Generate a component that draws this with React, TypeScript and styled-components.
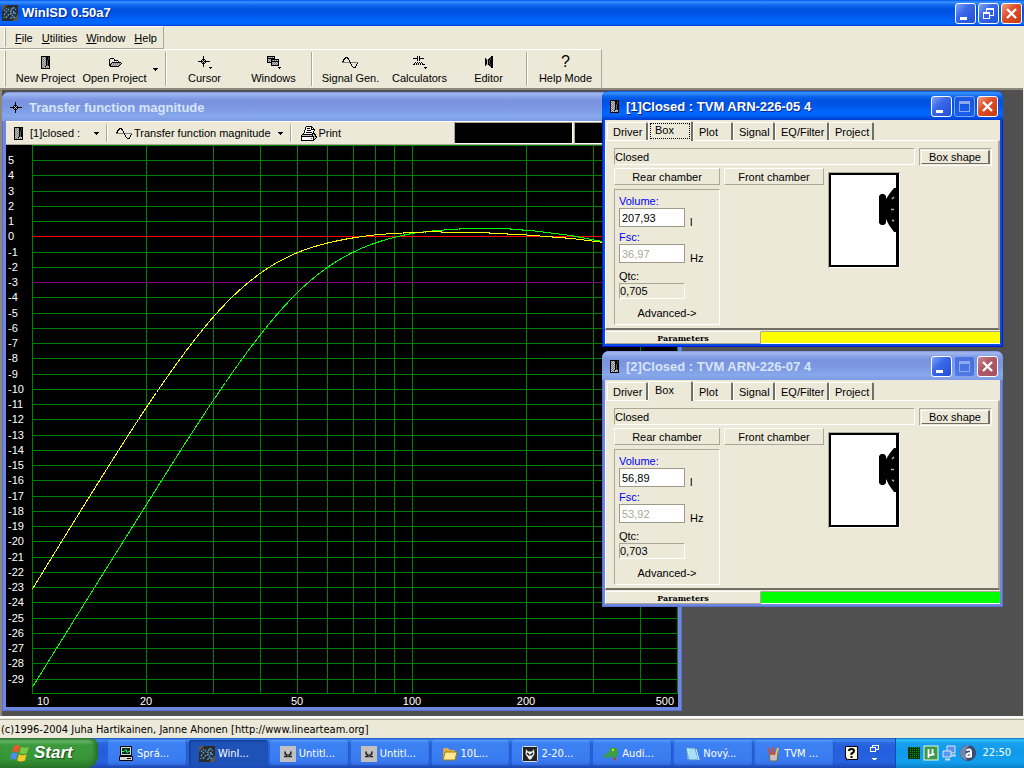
import React from 'react';
import styled, { createGlobalStyle, css } from 'styled-components';

const face = '#ece9d8';
const shade = '#aca899';
const dark = '#716f64';
const ui = '"Liberation Sans", Arial, sans-serif';
const tahoma = '"DejaVu Sans Condensed", "DejaVu Sans", sans-serif';

const Global = createGlobalStyle`
  * { box-sizing: border-box; }
  body { margin: 0; background: ${face}; font-family: ${ui}; font-size: 11px; line-height: 14px; color: #000; }
  button, input { font: inherit; color: inherit; margin: 0; }
  button { padding: 0; border: 0; background: none; cursor: default; white-space: nowrap; }
  svg { display: block; flex: none; }
`;

/* ---------- pixel icons ---------- */

const palette: Record<string, string> = {
  K: '#000000', W: '#ffffff', G: '#c0c0c0', D: '#808080', Y: '#e8e070', R: '#ff0000', E: '#404040',
};

function Pixels({ rows }: { rows: string[] }) {
  const w = Math.max(...rows.map((r) => r.length));
  const cells: React.ReactNode[] = [];
  rows.forEach((row, y) => {
    let x = 0;
    while (x < row.length) {
      const c = row[x];
      let n = 1;
      while (row[x + n] === c) n += 1;
      if (c !== '.') cells.push(<rect key={`${x}-${y}`} x={x} y={y} width={n} height={1} fill={palette[c]} />);
      x += n;
    }
  });
  return (
    <svg width={w} height={rows.length} viewBox={`0 0 ${w} ${rows.length}`} shapeRendering="crispEdges" aria-hidden="true">
      {cells}
    </svg>
  );
}

const cabinet = [
  'KKKKKKKKK', 'KGDGDKKEK', 'KDGDGKKEK', 'KGDGDKKEK', 'KDGDGKEKK', 'KGDGDKDKK', 'KDGDGKEKK',
  'KGDGDKDKK', 'KDGDGKEKK', 'KGDGDKDKK', 'KDGDKGGGK', 'KGDGDGDGK', 'KKKKKKKKK',
];
const crosshair = [
  '.....K......', '.....K......', '.....K......', '....KKK.....', '...KGKGK....', 'KKKKKYKKKKKK',
  '...KGKGK....', '....KKK.....', '.....K......', '.....K......', '.....K......',
];
const crosshairMenu = [
  ...crosshair, '...........KKK', '............K',
];
const folder = [
  '..KKKK........', '.KGWGWK.......', '.KWGWGKKKK....', '.KGWGWGWGWK...', '.KWGKKKKKKKKK.',
  '.KGKGDGDGDGDGK', '.KKDGDGDGDGDK.', '.KKGDGDGDGDK..', '..KKKKKKKKK...',
];
const cascade = [
  'KKKKKKKK......', 'KDGDGDGK......', 'KKKKKKKK......', 'KGDGKKKKKKKK..', 'KDGDKDGDGDGK..', 'KGDGKKKKKKKK..',
  'KKKKKGDGDGDK..', '....KDGDGDGK..', '....KGDGDGDK..', '....KKKKKKKK..', '..............', '...........KKK', '............K.',
];
const circuit = [
  '....K.K.......', '....K.K.......', 'KKKKK.KKKKK...', '....K.K.......', '....K.K.......', '..............',
  '..K.K.K.K.....', '.K.K.K.K.K....', 'KK.K.K.K.KKK..', '..............', '..............', '...........KKK', '............K.',
];
const speaker = [
  '......KK', '.....EKK', 'K...KEKK', 'KEGKKEKK', 'KKGKEKKK', 'KKGKEKKK', 'KKGKEKKK', 'KKGKEKKK', 'KEGKKEKK', 'K...KEKK',
  '.....EKK', '......KK',
];
const printer = [
  '.....KKKKKK.....', '....KWWWWWKK....', '....KWKKKWKWK...', '....KWWWWWKKKK..', '...KWWKKKKWWWK..', '...KWWWWWWWWK...',
  '...KWKKKKKKWK...', '..KWWWWWWWWKKK..', '.KKKKKKKKKKKGKK.', 'KGGGGGGGGGGKGGK.', 'KKKKKKKKKKKKKGKK', 'KWWWWWWWWWWWKGGK',
  'KWWWWWWWWWRWKGK.', 'KWWWWWWWWWWWKK..', 'KKKKKKKKKKKKK...',
];

const Wave = () => (
  <svg width="17" height="13" viewBox="0 0 17 13" aria-hidden="true" shapeRendering="crispEdges">
    <path d="M0 6.5H16" stroke="#808080" />
    <path d="M.5 6.5L2.5 2.5L4.5 1.5L6.5 2.5L9.5 9.5L11.5 11.5L13.5 11L15.5 7" fill="none" stroke="#000" />
  </svg>
);

const AppIcon = () => (
  <svg width="16" height="16" viewBox="0 0 16 16" aria-hidden="true">
    <rect width="16" height="16" fill="#2b2b2b" />
    <path d="M0 0H5L0 6ZM10 16L16 9V16Z" fill="#5b5750" />
    <path d="M2 10L6 5L8 3M8 7L11 2L14 5M4 13L7 9L12 8L9 13L13 12M2 6L5 3M11 6L14 9" fill="none" stroke="#4f9fe0" strokeWidth="1.300" strokeDasharray="2 1" />
    <path d="M1 13L4 11M10 4L8 10" stroke="#a0a098" strokeDasharray="1 1" />
  </svg>
);

/* ---------- application frame ---------- */

const activeTitle = css`
  background: linear-gradient(#0058ee 0, #3a93ff 2px, #1069ee 5px, #0053e1 9px, #0054e6 14px, #0066ff 21px, #0064fb 24px, #003dd0 100%);
`;
const inactiveTitle = css`
  background: linear-gradient(#7a96e0 0, #a3b8f0 2px, #8aa2e8 5px, #7a93df 9px, #7c98e2 16px, #86a8ec 24px, #7e9ae4 100%);
`;

const Page = styled.div`
  min-height: 100vh;
  display: flex;
  flex-direction: column;
`;

const AppTitle = styled.header`
  ${activeTitle}
  height: 26px;
  padding: 0 2px;
  display: flex;
  align-items: center;
  gap: 4px;
`;

const Caption = styled.h1<{ $dim?: boolean }>`
  margin: 0;
  flex: 1;
  min-width: 0;
  white-space: nowrap;
  overflow: hidden;
  font: 700 13px/18px ${ui};
  color: ${(p) => (p.$dim ? '#d8e4f8' : '#fff')};
  text-shadow: ${(p) => (p.$dim ? 'none' : '1px 1px #0a2a8c')};
`;

const CaptionButtons = styled.div`
  display: flex;
  gap: 2px;
`;

const CaptionButton = styled.button<{ $tone?: 'close' | 'closeDim' | 'off' }>`
  width: 21px;
  height: 21px;
  border: 1px solid ${(p) => (p.$tone === 'off' ? '#7f9ff0' : '#fff')};
  border-radius: 3px;
  display: grid;
  place-items: center;
  background: ${(p) =>
    p.$tone === 'close'
      ? 'linear-gradient(135deg, #f0a080, #e0512c 40%, #c83a10)'
      : p.$tone === 'closeDim'
        ? 'linear-gradient(135deg, #c88a98, #b05a68 40%, #a85060)'
        : p.$tone === 'off'
          ? 'rgba(40, 90, 225, 0.6)'
          : 'linear-gradient(135deg, #7fa4f8, #3a68e8 40%, #1f50d8)'};
`;

const Minimize = () => (
  <svg width="19" height="19" viewBox="0 0 19 19"><path d="M4 13H11V16H4Z" fill="#fff" /></svg>
);
const Maximize = () => (
  <svg width="19" height="19" viewBox="0 0 19 19" shapeRendering="crispEdges">
    <path d="M4.5 5V14.5H14.5V5M4 5H15" fill="none" stroke="#8fa8f0" /><path d="M4 4H15V7H4Z" fill="#8fa8f0" />
  </svg>
);
const Restore = () => (
  <svg width="19" height="19" viewBox="0 0 19 19" shapeRendering="crispEdges">
    <path d="M7 4H15V6H7ZM4 8H11V10H4Z" fill="#fff" />
    <path d="M4.5 8V14.5H10.5V8M7.5 4V8M14.5 4V11.5H11" fill="none" stroke="#fff" />
  </svg>
);
const Close = () => (
  <svg width="19" height="19" viewBox="0 0 19 19"><path d="M5 5L14 14M14 5L5 14" stroke="#fff" strokeWidth="2.4" /></svg>
);

const MenuBar = styled.nav`
  align-self: flex-start;
  display: flex;
  align-items: center;
  gap: 9px;
  height: 23px;
  padding: 0 6px 0 4px;
  border-top: 1px solid #fff;
  border-right: 1px solid ${shade};
  border-bottom: 1px solid ${shade};
`;

const Grip = styled.span`
  width: 2px;
  align-self: stretch;
  margin: 1px 0;
  border-left: 1px solid #fff;
  border-right: 1px solid ${shade};
`;

const MenuItem = styled.button`
  height: 18px;
  &::first-letter { text-decoration: underline; }
`;

const ToolBar = styled.div`
  align-self: flex-start;
  display: flex;
  height: 39px;
  padding-left: 4px;
  border-top: 1px solid #fff;
  border-right: 1px solid ${shade};
`;

const ToolGroup = styled.div`
  display: flex;
  padding: 0 3px;
  &:nth-child(2) { padding-left: 5px; }
  &:last-child { padding-right: 1px; }
`;

const ToolButton = styled.button`
  width: 69px;
  display: flex;
  flex-direction: column;
  align-items: center;
  padding-top: 3px;
`;

const ToolIcon = styled.span`
  height: 18px;
  display: flex;
  align-items: center;
  font: 16px/18px ${ui};
`;

const Divider = styled.span`
  width: 2px;
  margin: 2px 0;
  border-left: 1px solid ${shade};
  border-right: 1px solid #fff;
`;

const Arrow = () => (
  <svg width="5" height="3" viewBox="0 0 5 3" shapeRendering="crispEdges" aria-hidden="true">
    <path d="M0 0H5V1H0ZM1 1H4V2H1ZM2 2H3V3H2Z" fill="#000" />
  </svg>
);

const DropButton = styled.button`
  width: 13px;
  display: grid;
  place-items: center;
`;

/* ---------- MDI workspace ---------- */

const Workspace = styled.main`
  position: relative;
  flex: 1;
  min-height: 626px;
  margin-right: 1px;
  background: #505050;
  border: solid #8c897c;
  border-width: 2px 0 0 2px;
  overflow: hidden;
`;

const WindowFrame = styled.section<{ $x: number; $y: number; $w: number; $active?: boolean; $pad: number }>`
  position: absolute;
  left: ${(p) => p.$x}px;
  top: ${(p) => p.$y}px;
  width: ${(p) => p.$w}px;
  padding: 0 ${(p) => p.$pad}px ${(p) => p.$pad}px;
  border-radius: 7px 7px 0 0;
  background: ${(p) => (p.$active ? '#0a4be0' : '#7087e0')};
  box-shadow: inset 0 0 0 1px ${(p) => (p.$active ? '#0019cf' : '#5a6fd0')};
  overflow: hidden;
`;

const WindowTitle = styled.header<{ $active?: boolean; $inset: number }>`
  ${(p) => (p.$active ? activeTitle : inactiveTitle)}
  height: 29px;
  margin: 0 -${(p) => p.$inset}px;
  padding: 2px 5px 0 8px;
  display: flex;
  align-items: center;
  gap: 7px;
`;

const GraphBar = styled.div`
  display: flex;
  align-items: stretch;
  height: 24px;
  background: ${face};
  border-top: 1px solid #fff;
  border-bottom: 1px solid ${shade};
  overflow: hidden;
`;

const GraphButton = styled.button<{ $w: number }>`
  width: ${(p) => p.$w}px;
  display: flex;
  align-items: center;
  gap: 1px;
  padding: 0 7px 0 8px;
  & > svg:last-child { margin-left: auto; }
`;

const CabinetLabel = styled.span`
  margin-left: 6px;
`;

const Readout = styled.output<{ $w: number }>`
  width: ${(p) => p.$w}px;
  flex: none;
  background: #000;
  border: 1px solid ${shade};
  border-right-color: #fff;
  border-bottom-color: #fff;
`;

const Readouts = styled.div`
  display: flex;
  gap: 1px;
  margin-left: auto;
`;

const Plot = styled.svg`
  background: #000;
  font: 11px ${ui};
  fill: #fff;
`;

const plotLeft = 26;
const plotRight = 671;
const plotBottom = 548;
const dbToY = (db: number) => 91.75 - 15.25 * db;
const hzToX = (hz: number) => plotLeft + 380 * Math.log10(hz / 10);

type Trace = { color: string; fc: number; q: number; gain: [number, number][] };

const traces: Trace[] = [
  { color: '#00ff00', fc: 53.92, q: 0.703, gain: [[10, -0.25], [20, -0.2], [40, 0.02], [60, 0.25], [80, 0.45], [100, 0.6], [140, 0.65], [180, 0.56], [210, 0.4], [260, 0.1], [330, -0.4], [500, -1.2]] },
  { color: '#ffff00', fc: 36.97, q: 0.705, gain: [[10, -0.35], [20, -0.1], [40, 0.05], [60, 0.2], [80, 0.33], [110, 0.38], [150, 0.3], [200, 0.12], [260, -0.1], [330, -0.42], [500, -1.2]] },
];

function tracePath({ fc, q, gain }: Trace) {
  const pts: string[] = [];
  for (let x = plotLeft; x <= plotRight; x += 1) {
    const hz = 10 * 10 ** ((x - plotLeft) / 380);
    const r = hz / fc;
    const hp = 20 * Math.log10((r * r) / Math.hypot(1 - r * r, r / q));
    let i = 0;
    while (i < gain.length - 2 && gain[i + 1][0] < hz) i += 1;
    const [f0, g0] = gain[i];
    const [f1, g1] = gain[i + 1];
    const t = Math.log(hz / f0) / Math.log(f1 / f0);
    pts.push(`${x + 0.5} ${(dbToY(hp + g0 + (g1 - g0) * t)).toFixed(1)}`);
  }
  return `M${pts.join('L')}`;
}

function Chart() {
  const levels = Array.from({ length: 35 }, (_, i) => 5 - i);
  const freqs = [10, 20, 30, 40, 50, 60, 70, 80, 90, 100, 200, 300, 400, 500];
  const marks: [string, number, 'start' | 'middle' | 'end'][] = [
    ['10', 31, 'start'], ['20', 140, 'middle'], ['50', 291, 'middle'], ['100', 406, 'middle'], ['200', 520, 'middle'], ['500', 668, 'end'],
  ];
  return (
    <Plot width="672" height="562" viewBox="0 0 672 562" role="img" aria-label="Transfer function magnitude">
      <g stroke="#008000" shapeRendering="crispEdges" fill="none">
        <path d={`M${plotLeft} .5H672M${plotLeft} ${plotBottom + 0.5}H672`} />
        {freqs.map((f) => <path key={f} d={`M${Math.floor(hzToX(f)) + 0.5} 0V${plotBottom}`} />)}
        {levels.map((db) => (
          <path
            key={db}
            d={`M${plotLeft + 1} ${Math.floor(dbToY(db)) + 0.5}H672`}
            stroke={db === 0 ? '#ff0000' : db === -3 ? '#800080' : undefined}
          />
        ))}
      </g>
      {levels.map((db) => <text key={db} x="2" y={Math.floor(dbToY(db)) + 4}>{db}</text>)}
      {marks.map(([label, x, anchor]) => <text key={label} x={x} y="560" textAnchor={anchor}>{label}</text>)}
      {traces.map((t) => (
        <path key={t.color} d={tracePath(t)} fill="none" stroke={t.color} shapeRendering="crispEdges" />
      ))}
    </Plot>
  );
}

/* ---------- project window ---------- */

const ProjectBody = styled.div`
  background: ${face};
`;

const Tabs = styled.div`
  display: flex;
  align-items: flex-end;
  height: 20px;
  padding-left: 2px;
`;

const Tab = styled.button<{ $w: number; $on?: boolean }>`
  position: relative;
  width: ${(p) => p.$w}px;
  height: ${(p) => (p.$on ? 20 : 18)}px;
  padding: ${(p) => (p.$on ? '0 8px 4px 6px' : '0 5px')};
  text-align: left;
  border: 1px solid #fff;
  border-bottom: 0;
  border-right: 2px solid ${dark};
  border-radius: 2px 2px 0 0;
  background: ${face};
  margin-bottom: ${(p) => (p.$on ? -1 : 0)}px;
  z-index: ${(p) => (p.$on ? 1 : 0)};
`;

const FocusRing = styled.span`
  position: absolute;
  inset: 1px 1px 2px 1px;
  border: 1px dotted #000;
`;

const TabPage = styled.div`
  height: 190px;
  padding: 7px 6px 0 8px;
  border: 1px solid #fff;
  border-right: 2px solid ${shade};
  border-bottom: 2px solid ${dark};
`;

const TopLine = styled.div`
  display: flex;
  gap: 4px;
  align-items: flex-start;
`;

const sunken = css`
  border: 1px solid ${shade};
  border-right-color: #fff;
  border-bottom-color: #fff;
`;
const raised = css`
  border: 1px solid #fff;
  border-right-color: ${shade};
  border-bottom-color: ${shade};
`;

const TypeField = styled.output`
  ${sunken}
  flex: 1;
  height: 17px;
  line-height: 16px;
`;

const ShapeWell = styled.div`
  ${sunken}
  width: 73px;
  height: 18px;
  padding: 1px;
  display: flex;
`;

const ShapeButton = styled.button`
  flex: 1;
  line-height: 12px;
  border: 1px solid #fff;
  border-right: 2px solid ${dark};
  border-bottom: 1px solid ${dark};
`;

const Columns = styled.div`
  display: flex;
  gap: 4px;
  padding-top: 2px;
`;

const Column = styled.div<{ $w: number }>`
  width: ${(p) => p.$w}px;
`;

const ChamberButton = styled.button`
  ${raised}
  display: block;
  width: 100%;
  height: 17px;
`;

const Group = styled.div`
  ${sunken}
  height: 136px;
  margin-top: 4px;
  padding: 4px 4px 0;
  display: flex;
  flex-direction: column;
`;

const Field = styled.div`
  display: grid;
  grid-template-columns: 66px auto;
  column-gap: 5px;
  height: 36px;
  align-content: start;
`;

const FieldLabel = styled.label<{ $plain?: boolean }>`
  grid-column: 1 / 3;
  color: ${(p) => (p.$plain ? '#000' : '#0000ff')};
`;

const Entry = styled.input`
  width: 66px;
  height: 19px;
  border: 1px solid #a09888;
  background: #fff;
  padding: 1px 2px 0;
  &:disabled { color: ${shade}; }
`;

const Unit = styled.span`
  align-self: end;
  line-height: 10px;
`;

const QtcField = styled.div`
  display: flex;
  flex-direction: column;
  margin-top: 3px;
`;

const QtcValue = styled.output`
  ${sunken}
  width: 66px;
  height: 16px;
  line-height: 15px;
`;

const Advanced = styled.button`
  margin: 7px 0 0;
`;

const BoxPicture = styled.svg`
  margin-top: 4px;
`;

const ParamRow = styled.div`
  display: flex;
  height: 14px;
  padding-top: 1px;
`;

const ParamButton = styled.button`
  width: 156px;
  border: 1px solid #fff;
  border-right-color: ${shade};
  border-bottom-color: ${shade};
  font: 700 8px/10px "DejaVu Serif", serif;
`;

const Swatch = styled.span<{ $color: string }>`
  flex: 1;
  background: ${(p) => p.$color};
  border-top: 1px solid ${shade};
  border-bottom: 1px solid #fff;
`;

type ProjectProps = { id: string; y: number; title: string; active?: boolean; volume: string; fsc: string; qtc: string; color: string };

function ProjectWindow({ id, y, title, active, volume, fsc, qtc, color }: ProjectProps) {
  return (
    <WindowFrame $x={600} $y={y} $w={401} $active={active} $pad={3}>
      <WindowTitle $active={active} $inset={3}>
        <Pixels rows={cabinet} />
        <Caption as="h2" $dim={!active}>{title}</Caption>
        <CaptionButtons>
          <CaptionButton aria-label="Minimize"><Minimize /></CaptionButton>
          <CaptionButton aria-label="Maximize" $tone="off"><Maximize /></CaptionButton>
          <CaptionButton aria-label="Close" $tone={active ? 'close' : 'closeDim'}><Close /></CaptionButton>
        </CaptionButtons>
      </WindowTitle>
      <ProjectBody>
        <Tabs role="tablist">
          <Tab role="tab" $w={41}>Driver</Tab>
          <Tab role="tab" aria-selected="true" $w={45} $on>Box{active && <FocusRing />}</Tab>
          <Tab role="tab" $w={40}>Plot</Tab>
          <Tab role="tab" $w={42}>Signal</Tab>
          <Tab role="tab" $w={54}>EQ/Filter</Tab>
          <Tab role="tab" $w={45}>Project</Tab>
        </Tabs>
        <TabPage role="tabpanel">
          <TopLine>
            <TypeField>Closed</TypeField>
            <ShapeWell><ShapeButton>Box shape</ShapeButton></ShapeWell>
          </TopLine>
          <Columns>
            <Column $w={106}>
              <ChamberButton>Rear chamber</ChamberButton>
              <Group>
                <Field>
                  <FieldLabel htmlFor={`${id}-vol`}>Volume:</FieldLabel>
                  <Entry id={`${id}-vol`} defaultValue={volume} />
                  <Unit>l</Unit>
                </Field>
                <Field>
                  <FieldLabel htmlFor={`${id}-fsc`}>Fsc:</FieldLabel>
                  <Entry id={`${id}-fsc`} defaultValue={fsc} disabled />
                  <Unit>Hz</Unit>
                </Field>
                <QtcField>
                  <FieldLabel as="span" $plain>Qtc:</FieldLabel>
                  <QtcValue>{qtc}</QtcValue>
                </QtcField>
                <Advanced>Advanced-&gt;</Advanced>
              </Group>
            </Column>
            <Column $w={100}><ChamberButton>Front chamber</ChamberButton></Column>
            <BoxPicture width="72" height="96" viewBox="0 0 72 96" role="img" aria-label="Closed box">
              <rect width="72" height="96" fill="#fff" />
              <path d="M0 0H72V1H1V96H0Z" fill={shade} />
              <path d="M1 1H71V95H1ZM3 3V93H68V3Z" fill="#000" fillRule="evenodd" />
              <path d="M51 24L53 22H56L58 24V27L62 21L66 16H69V60H66L61 53L58 47V51L56 53H53L51 51Z" fill="#000" />
              <path d="M64 27L66 25M63 37.500H66M64 48L66 49" stroke="#b0b0b0" strokeWidth="1.500" />
            </BoxPicture>
          </Columns>
        </TabPage>
        <ParamRow>
          <ParamButton>Parameters</ParamButton>
          <Swatch $color={color} />
        </ParamRow>
      </ProjectBody>
    </WindowFrame>
  );
}

/* ---------- status bar and taskbar ---------- */

const StatusBar = styled.footer`
  height: 22px;
  padding: 4px 1px 0;
  border-top: 2px solid #fff;
  background: linear-gradient(${face} 1px, ${shade} 1px, ${shade} 2px, ${face} 2px);
  font: 11px/16px ${tahoma};
`;

const TaskBar = styled.div`
  height: 30px;
  display: flex;
  align-items: stretch;
  background: linear-gradient(#1f4fc0 0, #3f8cf3 2px, #2a66e0 5px, #245edc 12px, #2762e0 24px, #1c47b0 100%);
  color: #fff;
  font: 11px/16px ${tahoma};
`;

const StartButton = styled.button`
  width: 98px;
  display: flex;
  align-items: center;
  gap: 4px;
  padding-left: 10px;
  border-radius: 0 8px 12px 0;
  background: linear-gradient(#2f7a30 0, #68b868 3px, #3c9a3c 7px, #379637 20px, #2a7a2a 100%);
  box-shadow: inset -3px 0 4px #2a6a2a;
  font: italic 700 17px/20px ${ui};
  text-shadow: 1px 1px 1px #1a4a1a;
`;

const TaskList = styled.div`
  flex: 1;
  min-width: 0;
  display: flex;
  gap: 2px;
  padding: 2px 0 2px 10px;
`;

const Task = styled.button<{ $on?: boolean }>`
  flex: 1 1 0;
  min-width: 0;
  display: flex;
  align-items: center;
  gap: 3px;
  padding: 2px 0 0 10px;
  border-radius: 3px;
  background: ${(p) => (p.$on ? '#1e52b7' : 'linear-gradient(#5a9bfa 0, #3c81f3 3px, #3a7cf0 20px, #2f6ae0 100%)')};
  box-shadow: inset ${(p) => (p.$on ? '1px 1px 2px #0e3a8a' : '-1px -1px 1px #2458c4')};
`;

const Lang = styled.div`
  width: 61px;
  display: flex;
  align-items: center;
  gap: 11px;
  padding-left: 11px;
`;

const Tray = styled.div`
  width: 129px;
  display: flex;
  align-items: center;
  gap: 3px;
  padding: 0 13px 0 12px;
  border-left: 1px solid #0a50b0;
  background: linear-gradient(#0d6ac8 0, #2cc0f8 2px, #18a0ee 5px, #109aea 14px, #12a0ee 24px, #0c80c8 100%);
`;

const Clock = styled.time`
  margin-left: auto;
`;

const Flag = () => (
  <svg width="20" height="20" viewBox="0 0 20 20" aria-hidden="true">
    <path d="M4 3Q7 1 10 3L8 9.500Q5 7.500 2 9.500Z" fill="#f0562a" /><path d="M11 3.500Q15 6 19 3.500L17 10Q13 12 9.500 10Z" fill="#7cc840" />
    <path d="M1.500 10.500Q5 8.500 7.500 10.500L6 17Q3 15 0 17Z" fill="#4a8cf0" /><path d="M9 11.200Q12.500 13.200 16.500 11.200L15 17.500Q11 19.500 7 17.500Z" fill="#f8c828" />
  </svg>
);

const Glyph = ({ kind }: { kind: string }) => {
  if (kind === 'app') return <AppIcon />;
  return (
    <svg width="16" height="16" viewBox="0 0 16 16" aria-hidden="true">
      {kind === 'monitor' && <><path d="M2.500 .5H13.500V9.500H2.500ZM1.500 10.500H14.500V14.500H1.500Z" fill="#d8d8d0" stroke="#000" /><path d="M4 2H12V8H4Z" fill="#032" /><path d="M4 5.500H6L8 3.500L9 6.500L12 5" stroke="#3f6" fill="none" /><path d="M9 12.500H13" stroke="#000" /></>}
      {kind === 'omega' && <><rect width="16" height="16" fill="#c0c0c0" /><path d="M4 10.500H7V9Q4 8 5.500 5.500M12 10.500H9V9Q12 8 10.500 5.500" fill="none" stroke="#222" strokeWidth="1.500" /></>}
      {kind === 'folder' && <><path d="M1 4L2 2H6L8 4H13V14H1Z" fill="#e0b040" /><path d="M3 6H15L13 14H1Z" fill="#ffe890" stroke="#a07818" /></>}
      {kind === 'alien' && <><rect x=".5" y=".5" width="15" height="15" rx="1" fill="#222" stroke="#ddd" /><path d="M4 3L6 5.500H10L12 3L12.500 8L9 13.500H7L3.500 8Z" fill="#eee" /><path d="M5 7L7.500 9.500M11 7L8.500 9.500" stroke="#111" strokeWidth="1.500" /></>}
      {kind === 'snake' && <><path d="M1 9L6 6L7 2Q11 0 14 3Q16 7 14 10L12 14L9 12L10 9Q5 13 1 11Z" fill="#3aa040" /><path d="M10 10L14 15L11 14Z" fill="#e02020" /><circle cx="10" cy="4" r="1" fill="#ff0" /></>}
      {kind === 'note' && <><path d="M2 2H11L14.500 14H5Z" fill="#a8e0f8" stroke="#4890b8" /><path d="M4 2V14" stroke="#fff" strokeDasharray="1 1" /><path d="M12 3L15 14" stroke="#e8f8ff" /></>}
      {kind === 'brush' && <><path d="M4 8H13L12 15H5Z" fill="#c8c0b8" stroke="#666" /><path d="M6 9L3 2M9 9L8 1" stroke="#e04828" strokeWidth="2" /><path d="M11 9L13 2" stroke="#f0c030" strokeWidth="2" /></>}
    </svg>
  );
};

const tasks = [
  ['monitor', 'Sprá...'], ['app', 'WinI...'], ['omega', 'Untitl...'], ['omega', 'Untitl...'], ['folder', '10L...'],
  ['alien', '2-20...'], ['snake', 'Audi...'], ['note', 'Nový...'], ['brush', 'TVM ...'],
];

export default function App() {
  return (
    <Page>
      <Global />
      <AppTitle>
        <AppIcon />
        <Caption>WinISD 0.50a7</Caption>
        <CaptionButtons>
          <CaptionButton aria-label="Minimize"><Minimize /></CaptionButton>
          <CaptionButton aria-label="Restore"><Restore /></CaptionButton>
          <CaptionButton aria-label="Close" $tone="close"><Close /></CaptionButton>
        </CaptionButtons>
      </AppTitle>
      <MenuBar>
        <Grip />
        {['File', 'Utilities', 'Window', 'Help'].map((m) => <MenuItem key={m}>{m}</MenuItem>)}
      </MenuBar>
      <ToolBar>
        <Grip />
        <ToolGroup>
          <ToolButton><ToolIcon><Pixels rows={cabinet} /></ToolIcon>New Project</ToolButton>
          <ToolButton><ToolIcon><Pixels rows={folder} /></ToolIcon>Open Project</ToolButton>
          <DropButton aria-label="Recent projects"><Arrow /></DropButton>
        </ToolGroup>
        <Divider />
        <ToolGroup>
          <ToolButton><ToolIcon><Pixels rows={crosshairMenu} /></ToolIcon>Cursor</ToolButton>
          <ToolButton><ToolIcon><Pixels rows={cascade} /></ToolIcon>Windows</ToolButton>
        </ToolGroup>
        <Divider />
        <ToolGroup>
          <ToolButton><ToolIcon><Wave /></ToolIcon>Signal Gen.</ToolButton>
          <ToolButton><ToolIcon><Pixels rows={circuit} /></ToolIcon>Calculators</ToolButton>
          <ToolButton><ToolIcon><Pixels rows={speaker} /></ToolIcon>Editor</ToolButton>
        </ToolGroup>
        <Divider />
        <ToolGroup>
          <ToolButton><ToolIcon>?</ToolIcon>Help Mode</ToolButton>
        </ToolGroup>
      </ToolBar>
      <Workspace>
        <WindowFrame $x={0} $y={2} $w={680} $pad={4}>
          <WindowTitle $inset={4}>
            <Pixels rows={crosshair} />
            <Caption as="h2" $dim>Transfer function magnitude</Caption>
          </WindowTitle>
          <GraphBar>
            <GraphButton $w={100}><Pixels rows={cabinet} /><CabinetLabel>[1]closed :</CabinetLabel><Arrow /></GraphButton>
            <Divider />
            <GraphButton $w={182}><Wave />Transfer function magnitude<Arrow /></GraphButton>
            <Divider />
            <GraphButton $w={56}><Pixels rows={printer} />Print</GraphButton>
            <Readouts>
              <Readout $w={119} />
              <Readout $w={104} />
            </Readouts>
          </GraphBar>
          <Chart />
        </WindowFrame>
        <ProjectWindow id="p1" y={1} title="[1]Closed : TVM ARN-226-05 4" active volume="207,93" fsc="36,97" qtc="0,705" color="#ffff00" />
        <ProjectWindow id="p2" y={261} title="[2]Closed : TVM ARN-226-07 4" volume="56,89" fsc="53,92" qtc="0,703" color="#00ff00" />
      </Workspace>
      <StatusBar>(c)1996-2004 Juha Hartikainen, Janne Ahonen [http://www.linearteam.org]</StatusBar>
      <TaskBar>
        <StartButton><Flag />Start</StartButton>
        <TaskList>
          {tasks.map(([icon, label], i) => (
            <Task key={i} $on={i === 1}><Glyph kind={icon} />{label}</Task>
          ))}
        </TaskList>
        <Lang>
          <svg width="14" height="15" viewBox="0 0 14 15" aria-hidden="true">
            <path d="M.5.500H12.500V13.500H3L1.500 14V12H.5Z" fill="#fffbe0" stroke="#000" />
            <path d="M4 5Q4 3 6.500 3T9 5Q9 6.500 6.500 7.500V9M6.500 10V12" fill="none" stroke="#000" strokeWidth="2" />
          </svg>
          <svg width="11" height="17" viewBox="0 0 11 17" aria-hidden="true" shapeRendering="crispEdges">
            <path d="M2.500 3V.5H8.500V4.500H6M.5 2.500H5.500V6.500H.5Z" fill="none" stroke="#fff" />
            <path d="M2 13H7V14H6V15H3V14H2Z" fill="#fff" />
          </svg>
        </Lang>
        <Tray>
          <svg width="12" height="12" viewBox="0 0 12 12" shapeRendering="crispEdges" aria-hidden="true">
            <rect width="12" height="12" fill="#030" /><path d="M2.500 0V12M4.500 0V12M6.500 0V12M8.500 0V12M10.500 0V12" stroke="#0a9a28" strokeDasharray="1 1" />
          </svg>
          <svg width="16" height="16" viewBox="0 0 16 16" aria-hidden="true">
            <rect x="1" y="1" width="14" height="14" fill="#3a9a48" stroke="#e8f8e8" /><path d="M5.500 13V4M5.500 9.500Q8 11 9.500 9V4M9.500 9.500H11.500" fill="none" stroke="#fff" strokeWidth="1.800" />
          </svg>
          <svg width="15" height="16" viewBox="0 0 15 16" aria-hidden="true">
            <path d="M5 1H13V8H5Z" fill="#5a90e8" stroke="#d8e8f8" /><path d="M1 6H9V12H1Z" fill="#5a98f0" stroke="#d8e8f8" /><path d="M3 14.500H8M9 10.500H14" stroke="#c8d8e8" strokeWidth="2" />
          </svg>
          <svg width="16" height="16" viewBox="0 0 16 16" aria-hidden="true">
            <circle cx="8" cy="8" r="8" fill="#3a4a70" /><path d="M0 8A8 8 0 0 1 10 .3Q3 4 7 15.500A8 8 0 0 1 0 8Z" fill="#7088b0" />
            <path d="M6.500 5.500Q10.500 3 11 6.500V12.500M11 8Q6.500 8 6.500 10.500T11 11" fill="none" stroke="#fff" strokeWidth="2" />
          </svg>
          <Clock>22:50</Clock>
        </Tray>
      </TaskBar>
    </Page>
  );
}
